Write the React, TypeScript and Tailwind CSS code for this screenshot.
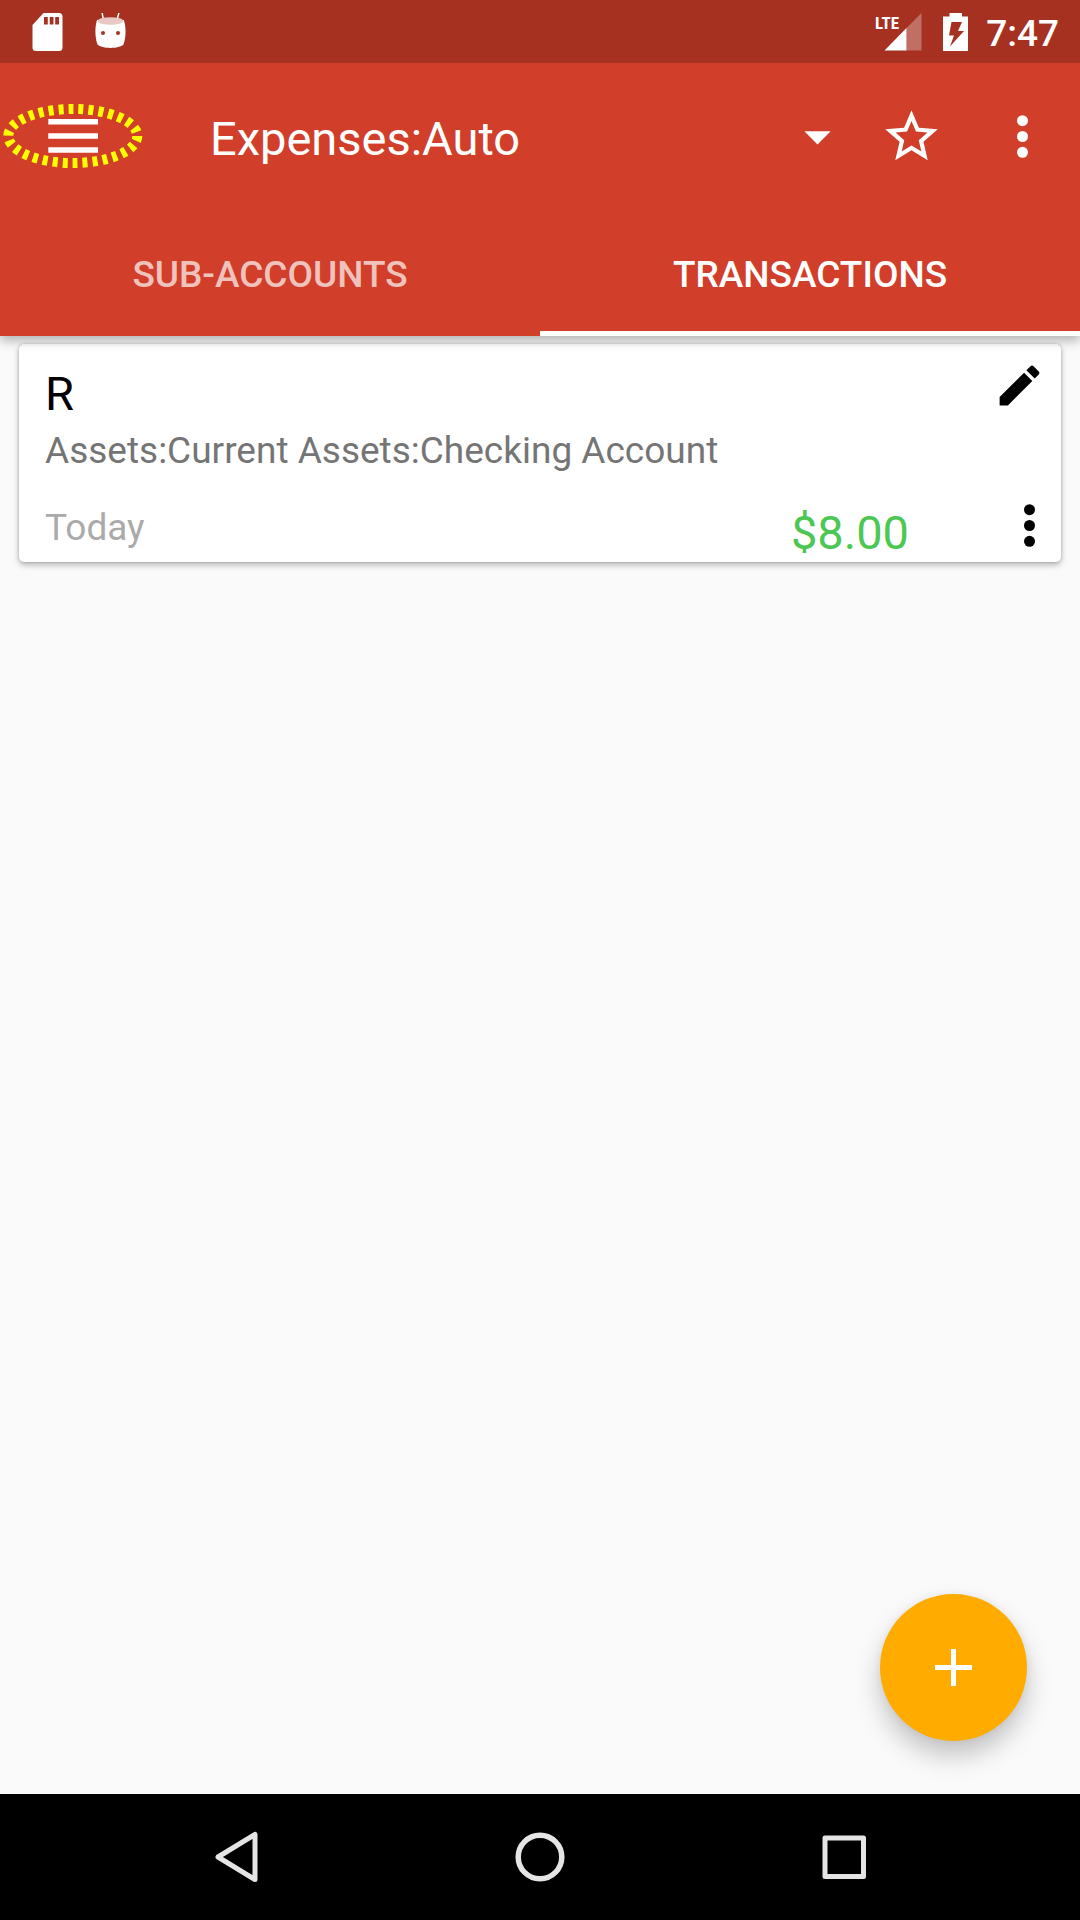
import React from "react";

function SdCardIcon() {
  return (
    <svg width="32" height="38" viewBox="0 0 32 38" aria-hidden="true">
      <path
        fillRule="evenodd"
        fill="#fff"
        d="M11.500 0H27a3.500 3.500 0 0 1 3.500 3.500v31A3.500 3.500 0 0 1 27 38H4a3.500 3.500 0 0 1-3.500-3.500V12zM12 4v7.500h3.800V4zm5.700 0v7.500h3.800V4zm5.500 0v7.500h3.800V4z"
      />
    </svg>
  );
}

function AndroidHeadIcon() {
  return (
    <svg width="32" height="38" viewBox="0 0 32 38" aria-hidden="true">
      <path d="M7 -.5l1.500 7.500M24 -.5l-2 7.500" stroke="#fff" strokeWidth="1.500" strokeLinecap="round" />
      <path
        fill="#fff"
        d="M2 7C-.2 14-.2 24 2.500 31.500c2 2.200 8 3.400 13 3.400s11-1.200 13-3.400c2.700-7.500 2.700-17.500.3-24.500z"
      />
      <ellipse cx="15.500" cy="8" rx="12.800" ry="3.800" fill="#e8c9c5" />
      <circle cx="8" cy="20" r="2" fill="#a63121" />
      <circle cx="23" cy="20" r="2" fill="#a63121" />
    </svg>
  );
}

function SignalIcon() {
  return (
    <svg width="48" height="38" viewBox="0 0 48 38" aria-hidden="true">
      <path d="M47.500 0v37.500H32.500V15z" fill="#fff" fillOpacity="0.3" />
      <path d="M32.500 15v22.500H10.500z" fill="#fff" />
      <text
        x="1"
        y="16"
        fill="#fff"
        fontSize="17"
        className="font-['Roboto_Condensed','Liberation_Sans_Narrow','Open_Sans_Condensed','Noto_Sans_Condensed','Lato',sans-serif] font-bold"
      >
        LTE
      </text>
    </svg>
  );
}

function BatteryIcon() {
  return (
    <svg width="26" height="38" viewBox="0 0 26 38" aria-hidden="true">
      <path
        fillRule="evenodd"
        fill="#fff"
        d="M6.500 0h12.500v3.500h6V38H0V3.500h6.500zM8.500 9L6 22.500h5L7 33.500 21 18h-6l4-9z"
      />
    </svg>
  );
}

function MoreIcon() {
  return (
    <svg width="63" height="63" viewBox="0 0 63 63" fill="currentColor" aria-hidden="true">
      <circle cx="31.500" cy="15.700" r="5.500" />
      <circle cx="31.500" cy="31.500" r="5.500" />
      <circle cx="31.500" cy="47.300" r="5.500" />
    </svg>
  );
}

function StatusBar() {
  return (
    <div className="flex h-[63px] items-center bg-[#a63121] pr-[21px] pl-8 text-white">
      <div className="flex items-center gap-[31px]">
        <SdCardIcon />
        <AndroidHeadIcon />
      </div>
      <div className="ml-auto flex items-center">
        <SignalIcon />
        <div className="ml-[21px]">
          <BatteryIcon />
        </div>
        <span className="ml-[17px] pt-1 text-[37px] leading-[44px] font-medium">7:47</span>
      </div>
    </div>
  );
}

function Toolbar() {
  return (
    <div className="flex h-[147px] items-center pr-[26px] text-white">
      <button type="button" aria-label="Open navigation drawer" className="relative h-[147px] w-[147px] shrink-0">
        <svg width="147" height="147" viewBox="0 0 147 147" aria-hidden="true">
          <path d="M48.300 56h49.700v5.500H48.300zM48.300 70.200h49.700v5.500H48.300zM48.300 84.300h49.700v5.500H48.300z" fill="#fff" />
          <ellipse
            cx="72.800"
            cy="73"
            rx="64.500"
            ry="27"
            fill="none"
            stroke="#ff0"
            strokeWidth="10"
            strokeDasharray="5 5"
          />
        </svg>
      </button>
      <button type="button" className="ml-[63px] flex min-w-0 flex-1 items-center justify-between">
        <span className="truncate pt-1 text-[47px] leading-[56px]">Expenses:Auto</span>
        <svg width="63" height="63" viewBox="0 0 24 24" fill="#fff" aria-hidden="true">
          <path d="M7 10l5 5 5-5z" />
        </svg>
      </button>
      <button type="button" aria-label="Favorite" className="ml-[31px] shrink-0">
        <svg width="63" height="63" viewBox="0 0 24 24" fill="#fff" aria-hidden="true">
          <path d="M22 9.240l-7.190-.62L12 2 9.190 8.630 2 9.240l5.460 4.730L5.820 21 12 17.270 18.180 21l-1.630-7.030L22 9.240zM12 15.400l-3.760 2.270 1-4.280-3.320-2.880 4.380-.38L12 6.100l1.710 4.040 4.380.38-3.320 2.880 1 4.280L12 15.400z" />
        </svg>
      </button>
      <button type="button" aria-label="More options" className="ml-12 shrink-0">
        <MoreIcon />
      </button>
    </div>
  );
}

function Tabs() {
  return (
    <div role="tablist" className="grid h-[126px] grid-cols-2 text-[37px] leading-[44px] font-medium text-white">
      <button type="button" role="tab" aria-selected={false} className="pt-1 text-white/70">
        SUB-ACCOUNTS
      </button>
      <button type="button" role="tab" aria-selected={true} className="relative pt-1">
        TRANSACTIONS
        <span className="absolute inset-x-0 bottom-0 h-[5px] bg-white" />
      </button>
    </div>
  );
}

function TransactionCard() {
  return (
    <article className="mx-[19px] mt-2 rounded-[5px] bg-white pt-[22px] pr-0 pb-px pl-[26px] shadow-[0_3px_6px_rgba(0,0,0,0.28),0_0_3px_rgba(0,0,0,0.18)]">
      <div className="flex items-start justify-between">
        <div>
          <h2 className="text-[47px] leading-[56px] text-black">R</h2>
          <p className="mt-[7px] text-[37px] leading-[44px] text-[#757575]">
            Assets:Current Assets:Checking Account
          </p>
        </div>
        <button type="button" aria-label="Edit transaction" className="mr-[15px] -mt-[7px]">
          <svg width="53" height="53" viewBox="0 0 24 24" fill="#000" aria-hidden="true">
            <path d="M3 17.250V21h3.750L17.810 9.940l-3.750-3.750L3 17.250zM20.710 7.040c.39-.39.39-1.020 0-1.410l-2.340-2.340c-.39-.39-1.020-.39-1.410 0l-1.830 1.830 3.750 3.750 1.830-1.830z" />
          </svg>
        </button>
      </div>
      <div className="mt-8 flex h-14 items-start">
        <span className="pt-px text-[37px] leading-[44px] text-[#aaa]">Today</span>
        <span className="ml-auto text-[47px] leading-[56px] text-[#4dc754]">$8.00</span>
        <button type="button" aria-label="Transaction options" className="-mt-[11px] ml-[89px] text-black">
          <MoreIcon />
        </button>
      </div>
    </article>
  );
}

function NavigationBar() {
  return (
    <nav className="flex h-[126px] items-center justify-center gap-[94px] bg-black">
      <button type="button" aria-label="Back" className="flex w-[210px] justify-center">
        <svg width="63" height="63" viewBox="0 0 63 63" fill="none" stroke="#e5e5e5" strokeWidth="5" strokeLinejoin="round" aria-hidden="true">
          <path d="M50 8.500v45L13 31z" />
        </svg>
      </button>
      <button type="button" aria-label="Home" className="flex w-[210px] justify-center">
        <svg width="63" height="63" viewBox="0 0 63 63" fill="none" stroke="#e5e5e5" strokeWidth="5.500" aria-hidden="true">
          <circle cx="31" cy="31" r="21.800" />
        </svg>
      </button>
      <button type="button" aria-label="Recent apps" className="flex w-[210px] justify-center">
        <svg width="63" height="63" viewBox="0 0 63 63" fill="none" stroke="#e5e5e5" strokeWidth="5" strokeLinejoin="round" aria-hidden="true">
          <path d="M12 12h38.500v38.500H12z" />
        </svg>
      </button>
    </nav>
  );
}

export default function App() {
  return (
    <div className="flex min-h-screen flex-col bg-[#fafafa] font-['Roboto',sans-serif]">
      <header className="relative z-10 bg-[#d13e2a] shadow-[0_5px_10px_rgba(0,0,0,0.28)]">
        <StatusBar />
        <Toolbar />
        <Tabs />
      </header>
      <main className="relative flex-1">
        <TransactionCard />
        <button
          type="button"
          aria-label="Add transaction"
          className="absolute right-[53px] bottom-[53px] flex size-[147px] items-center justify-center rounded-full bg-[#ffab00] shadow-[0_15px_26px_rgba(0,0,0,0.22),0_0_8px_rgba(0,0,0,0.06)]"
        >
          <svg width="63" height="63" viewBox="0 0 63 63" aria-hidden="true">
            <path d="M29 13h5v16h16v5H34v16h-5V34H13v-5h16z" fill="#fff" />
          </svg>
        </button>
      </main>
      <NavigationBar />
    </div>
  );
}
